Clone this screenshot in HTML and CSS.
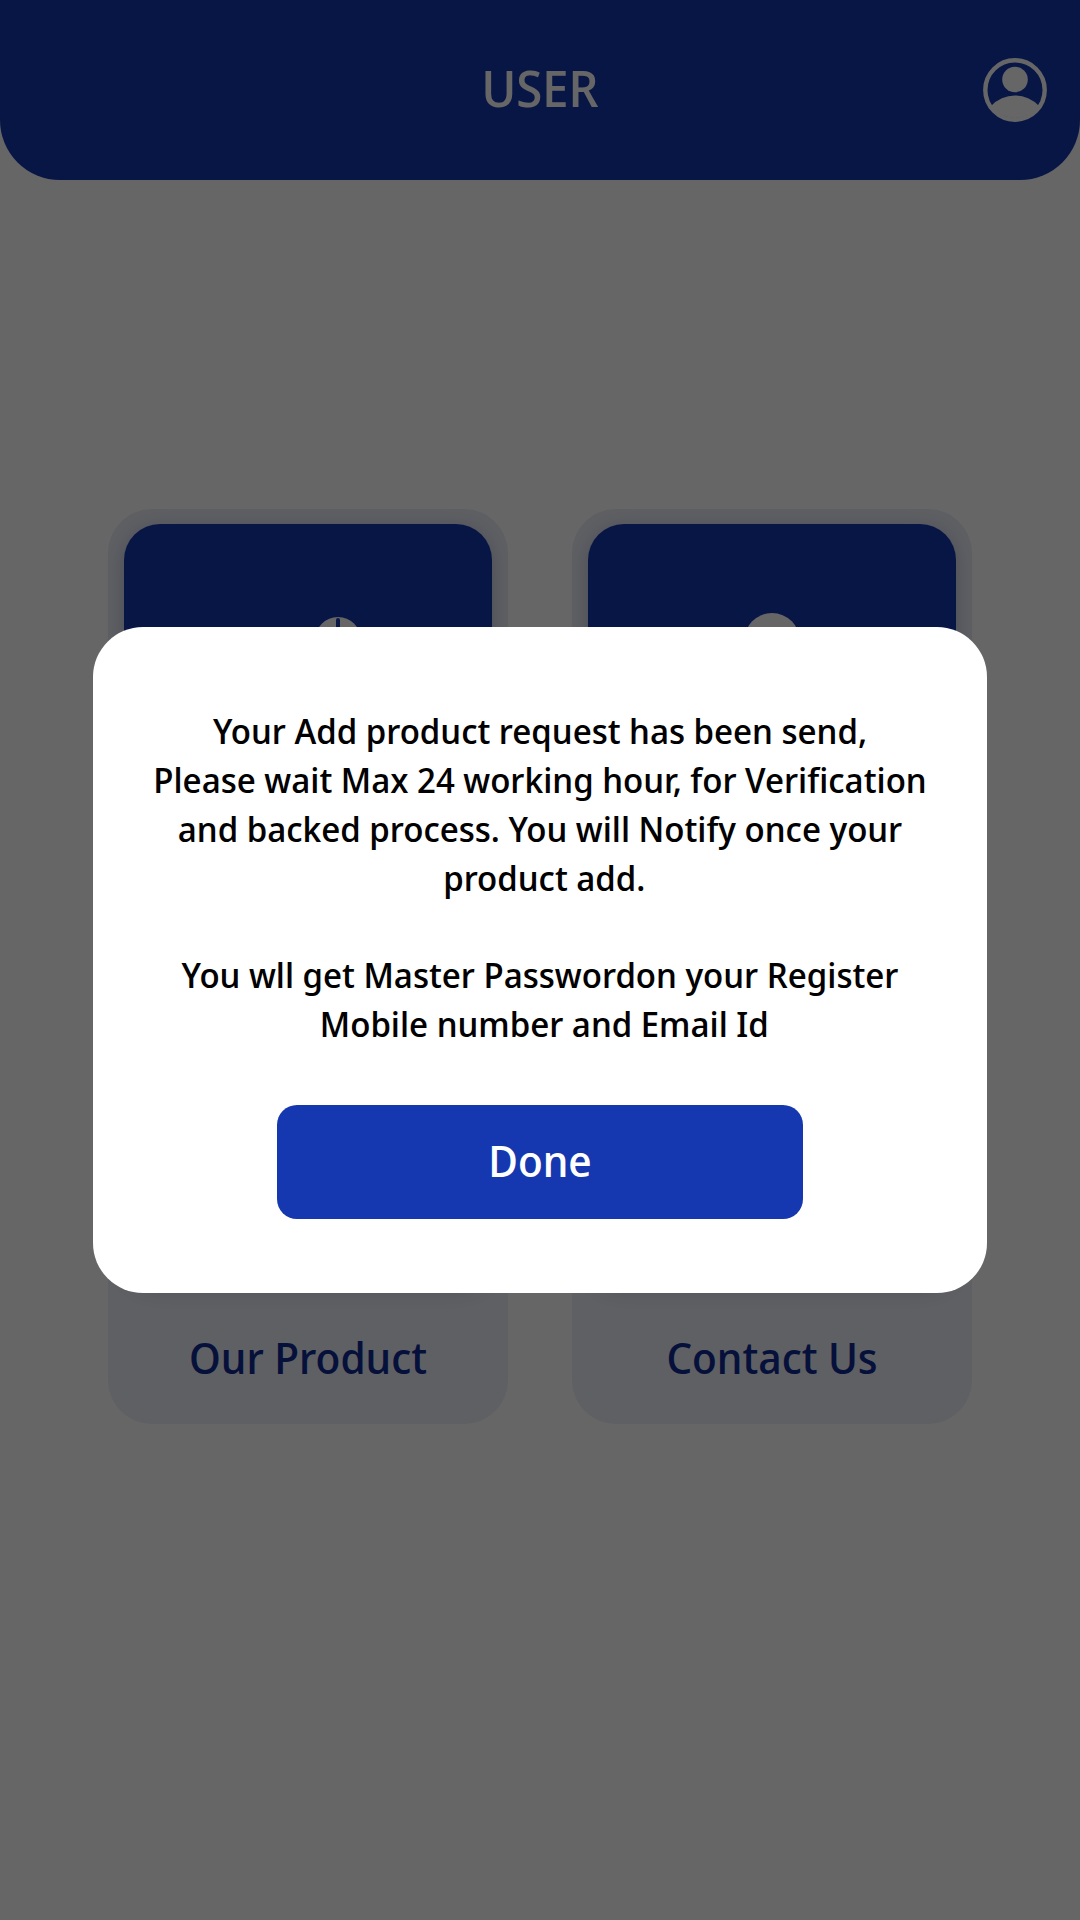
FILE: index.html
```
<!DOCTYPE html>
<html lang="en">
<head>
<meta charset="utf-8">
<meta name="viewport" content="width=device-width, initial-scale=1">
<title>User</title>
<link rel="stylesheet" href="styles.css">
</head>
<body>
<div class="page">
  <header class="header">
    <h1 class="title">USER</h1>
    <a class="account" href="#" aria-label="Account">
      <svg class="account-icon" viewBox="0 0 64 64" aria-hidden="true">
        <circle cx="32" cy="32" r="29.7" fill="none" stroke="currentColor" stroke-width="4.4"/>
        <circle cx="32" cy="21.5" r="12.8" fill="currentColor"/>
        <path d="M8 48A32.6 32.6 0 0 1 56 48A30 30 0 0 1 8 48Z" fill="currentColor"/>
      </svg>
    </a>
  </header>
  <main class="menu">
    <a class="card" href="#" aria-label="Activity">
      <span class="tile">
        <svg class="tile-icon" viewBox="0 0 120 92" aria-hidden="true">
          <circle cx="90" cy="27" r="23" fill="#fff"/>
          <path d="M90 7V27H102" fill="none" stroke="#1538b0" stroke-width="4" stroke-linecap="round"/>
        </svg>
      </span>
    </a>
    <a class="card" href="#" aria-label="Profile">
      <span class="tile">
        <svg class="tile-icon" viewBox="0 0 120 92" aria-hidden="true">
          <circle cx="60" cy="28" r="28" fill="#fff"/>
          <path d="M14 92a46 30 0 0 1 92 0Z" fill="#fff"/>
        </svg>
      </span>
    </a>
    <a class="card" href="#"><span class="tile"></span><span class="label">Our Product</span></a>
    <a class="card" href="#"><span class="tile"></span><span class="label">Contact Us</span></a>
  </main>
</div>
<div class="overlay">
  <section class="dialog" role="dialog" aria-modal="true" aria-describedby="message">
    <div class="message" id="message">
      <p>Your Add product request has been send,<br>Please wait Max 24 working hour, for Verification<br>and backed process. You will Notify once your<br>&nbsp;product add.</p>
      <p>You wll get Master Passwordon your Register<br>&nbsp;Mobile number and Email Id</p>
    </div>
    <button class="done" type="button">Done</button>
  </section>
</div>
</body>
</html>
```
FILE: styles.css
```
* {
  box-sizing: border-box;
}

body {
  margin: 0;
  background: #fff;
  font-family: "Noto Sans Display", "Noto Sans", sans-serif;
  font-weight: 500;
}

.page {
  min-height: 100vh;
}

.header {
  display: grid;
  grid-template-columns: 1fr auto 1fr;
  align-items: center;
  height: 180px;
  padding: 0 33px;
  border-radius: 0 0 60px 60px;
  background: #1538b0;
  color: #fff;
}

.title {
  grid-column: 2;
  margin: 0;
  padding-bottom: 4px;
  font-size: 50px;
  font-weight: 500;
  line-height: 72px;
}

.account {
  justify-self: end;
  display: flex;
  color: inherit;
}

.account-icon {
  width: 64px;
  height: 64px;
}

.menu {
  display: grid;
  grid-template-columns: 1fr 1fr;
  gap: 65px 64px;
  padding: 329px 108px 0;
}

.card {
  display: flex;
  flex-direction: column;
  min-height: 425px;
  padding: 15px 16px 0;
  border-radius: 44px;
  background: #edeff8;
  color: #0f2c94;
  text-decoration: none;
}

.tile {
  display: flex;
  align-items: center;
  justify-content: center;
  height: 270px;
  border-radius: 36px;
  background: #1538b0;
  box-shadow: 0 4px 20px rgba(21, 56, 120, 0.25);
}

.tile-icon {
  width: 120px;
  height: 92px;
}

.label {
  padding-top: 42px;
  font-size: 43px;
  line-height: 64px;
  text-align: center;
}

.overlay {
  position: fixed;
  inset: 0;
  display: flex;
  align-items: center;
  padding: 0 93px;
  background: rgba(0, 0, 0, 0.6);
}

.dialog {
  display: flex;
  flex-direction: column;
  align-items: center;
  gap: 57px;
  width: 100%;
  padding: 79px 24px 74px;
  border-radius: 50px;
  background: #fff;
}

.message {
  display: flex;
  flex-direction: column;
  gap: 48px;
  color: #000;
  font-size: 35px;
  line-height: 49px;
  text-align: center;
}

.message p {
  margin: 0;
}

.done {
  width: 526px;
  max-width: 100%;
  height: 114px;
  padding: 0 0 4px;
  border: 0;
  border-radius: 20px;
  background: #1538b0;
  color: #fff;
  font: inherit;
  font-size: 43px;
}
```
